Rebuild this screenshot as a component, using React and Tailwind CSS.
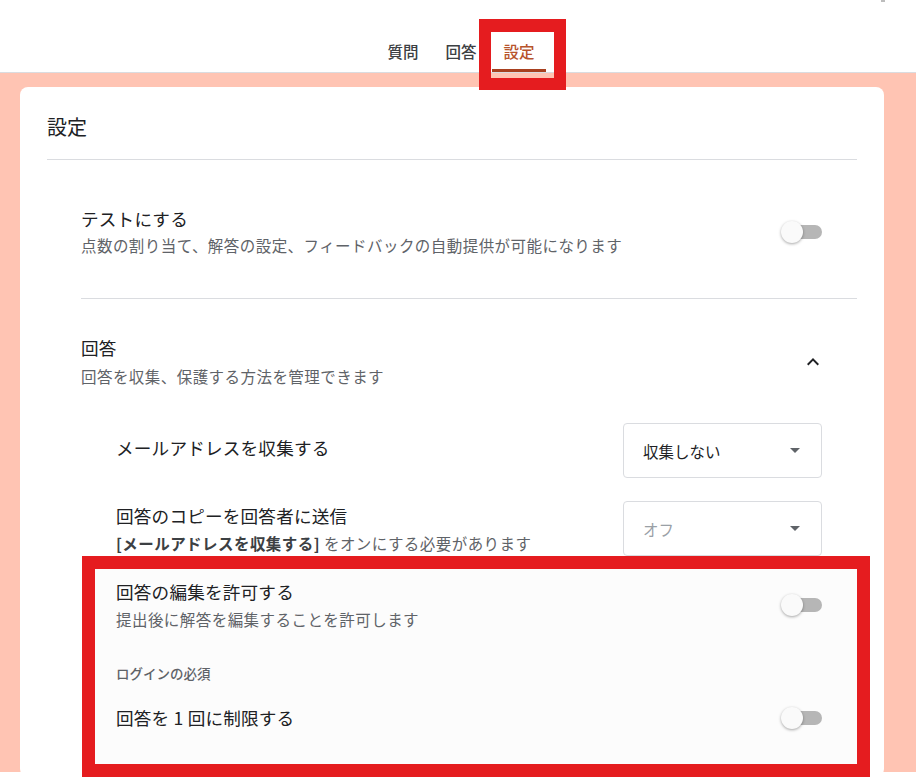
import React from "react";

const FONT = { fontFamily: '"Noto Sans CJK JP", "Noto Sans", Roboto, sans-serif' };

function Toggle() {
  return (
    <div className="relative w-[41px] h-[22px] shrink-0">
      <div className="absolute right-0 top-[4px] w-[36px] h-[14px] rounded-full bg-[#b6b6b6]" />
      <div className="absolute left-0 top-0 w-[22px] h-[22px] rounded-full bg-[#fafafa] shadow-[0_1px_3px_rgba(0,0,0,0.35)]" />
    </div>
  );
}

function Dropdown({ label, disabled }) {
  return (
    <div className="w-[199px] h-[55px] shrink-0 rounded-[4px] border border-[#dadce0] bg-white flex items-center pl-[19px] pr-[21px]">
      <span className={`flex-1 text-[15.5px] leading-[22px] ${disabled ? "text-[#9aa0a6]" : "text-[#202124]"}`}>{label}</span>
      <svg width="10" height="5" viewBox="0 0 10 5"><path d="M0 0h10L5 5z" fill="#5f6368" /></svg>
    </div>
  );
}

function Tab({ label, active }) {
  return (
    <div className="relative w-[54px] h-[72px] flex flex-col items-center">
      <span className={`mt-[41px] text-[15.5px] leading-[20px] font-medium ${active ? "text-[#b7542c]" : "text-[#3c4043]"}`}>{label}</span>
      {active && <div className="absolute bottom-0 left-0 right-0 h-[3px] bg-[#a8401f]" />}
      {active && (
        <div className="absolute z-10 left-[-13px] right-[-20px] top-[19px] bottom-[-18px] border-[12px] border-t-[13px] border-[#e51c1f]" />
      )}
    </div>
  );
}

export default function App() {
  return (
    <div className="w-[916px] min-h-[777px] bg-white overflow-hidden" style={FONT}>
      <header className="relative h-[73px] bg-white border-b border-[#dadce0] flex pl-[376px]">
        <div className="absolute top-0 right-[31px] w-[4px] h-[2px] bg-[#bdbdbd]" />
        <div className="flex gap-[4px] h-[72px]">
          <Tab label="質問" />
          <Tab label="回答" />
          <Tab label="設定" active />
        </div>
      </header>

      <div className="h-[699px] bg-[#ffc4b3] pt-[14px] pl-[20px] pr-[32px]">
        <div className="bg-white rounded-[8px] px-[27px]">
          {/* Title */}
          <div className="pt-[26px] pb-[18px] border-b border-[#dadce0]">
            <h1 className="text-[20px] leading-[28px] text-[#202124]">設定</h1>
          </div>

          {/* Quiz section */}
          <div className="ml-[34px] border-b border-[#dadce0] pt-[47px] pb-[42px] flex items-center">
            <div className="flex-1">
              <div className="text-[17.6px] leading-[24px] text-[#202124] tracking-[0.2px]">テストにする</div>
              <div className="mt-[3px] text-[15.5px] leading-[22px] text-[#5f6368] tracking-[0.45px]">
                点数の割り当て、解答の設定、フィードバックの自動提供が可能になります
              </div>
            </div>
            <div className="mr-[35px]"><Toggle /></div>
          </div>

          {/* Responses section */}
          <div className="ml-[34px] pt-[37px]">
            <div className="flex items-center">
              <div className="flex-1">
                <div className="text-[17.6px] leading-[24px] text-[#202124] tracking-[0.2px]">回答</div>
                <div className="mt-[5px] text-[15.5px] leading-[22px] text-[#5f6368] tracking-[0.45px]">回答を収集、保護する方法を管理できます</div>
              </div>
              <svg className="mr-[32px]" width="24" height="24" viewBox="0 0 24 24">
                <path d="M12 8l-6 6 1.41 1.41L12 10.83l4.59 4.58L18 14z" fill="#202124" />
              </svg>
            </div>

            <div className="mt-[36px] pl-[35px] pr-[35px] flex items-start">
              <div className="flex-1 pt-[13px] text-[17.6px] leading-[24px] text-[#202124] tracking-[0.2px]">メールアドレスを収集する</div>
              <Dropdown label="収集しない" />
            </div>

            <div className="mt-[23px] pl-[35px] pr-[35px] flex items-start">
              <div className="flex-1 pt-[3px]">
                <div className="text-[17.6px] leading-[24px] text-[#202124] tracking-[0.2px]">回答のコピーを回答者に送信</div>
                <div className="mt-[4px] text-[15.5px] leading-[22px] text-[#5f6368] tracking-[0.45px]">
                  <span className="font-bold text-[#3c4043]">[メールアドレスを収集する]</span> をオンにする必要があります
                </div>
              </div>
              <Dropdown label="オフ" disabled />
            </div>

            {/* Highlighted box */}
            <div className="ml-[1px] mr-[-13px] border-[13px] border-[#e51c1f] bg-[#fcfcfc] pt-[11px] pb-[34px] pl-[21px] pr-[35px]">
              <div className="flex items-center">
                <div className="flex-1">
                  <div className="text-[17.6px] leading-[24px] text-[#202124] tracking-[0.2px]">回答の編集を許可する</div>
                  <div className="mt-[4px] text-[15.5px] leading-[22px] text-[#5f6368] tracking-[0.45px]">提出後に解答を編集することを許可します</div>
                </div>
                <Toggle />
              </div>
              <div className="mt-[33px] text-[13.5px] leading-[20px] font-medium text-[#5f6368]">ログインの必須</div>
              <div className="mt-[23px] flex items-center">
                <div className="flex-1 text-[17.6px] leading-[24px] text-[#202124] tracking-[0.2px]">回答を 1 回に制限する</div>
                <Toggle />
              </div>
            </div>
          </div>
        </div>
      </div>
    </div>
  );
}
